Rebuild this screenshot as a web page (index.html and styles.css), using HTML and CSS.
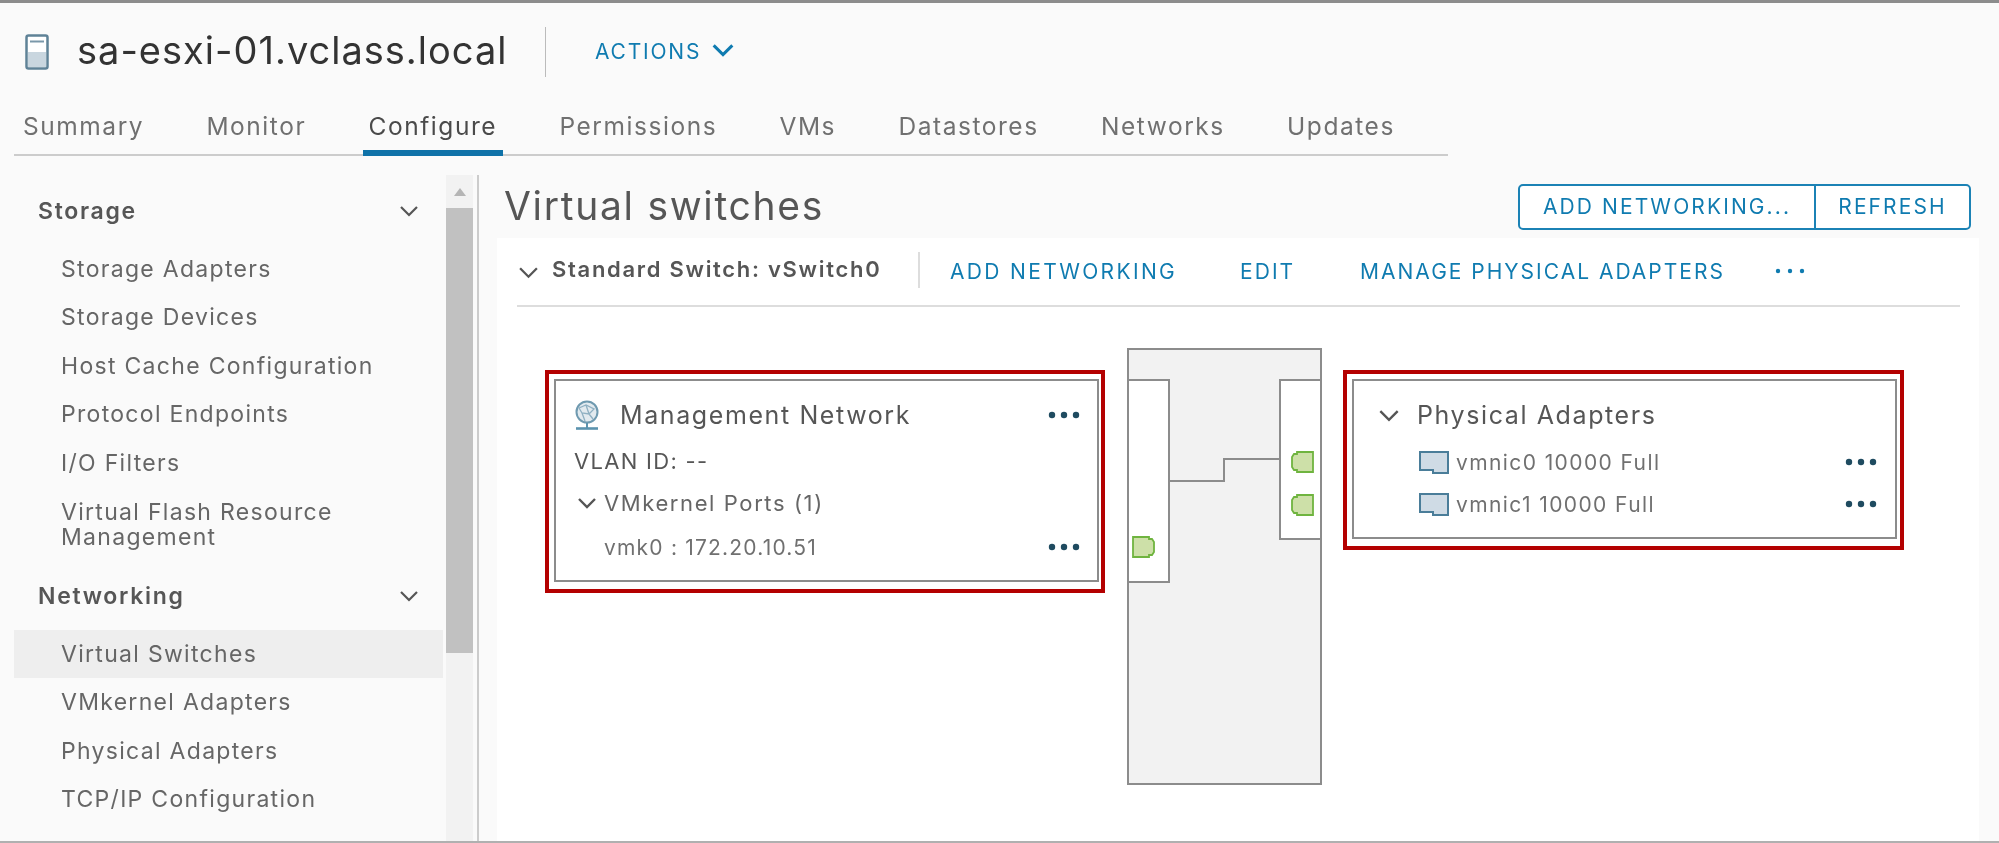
FILE: index.html
```html
<!DOCTYPE html>
<html lang="en">
<head>
<meta charset="utf-8">
<title>Virtual switches</title>
<link rel="stylesheet" href="styles.css">
</head>
<body>
<div class="page">
  <header class="head">
    <svg class="host-icon" viewBox="0 0 24 36"><rect x="1.5" y="1.5" width="21" height="33" rx="2" fill="#fff" stroke="#5f8297" stroke-width="2.5"/><rect x="3" y="18" width="18" height="15" fill="#c9d6df"/><path d="M5 7.5H19" stroke="#7a98aa" stroke-width="2"/></svg>
    <h1 class="host-name">sa-esxi-01.vclass.local</h1>
    <span class="head-sep"></span>
    <a class="actions">ACTIONS</a>
    <svg class="actions-chev" viewBox="0 0 20 12"><path d="M2 2L10 10L18 2" fill="none" stroke="#0f7bb0" stroke-width="2.6"/></svg>
  </header>
  <nav class="tabs">
    <a class="tab">Summary</a>
    <a class="tab">Monitor</a>
    <a class="tab active">Configure</a>
    <a class="tab">Permissions</a>
    <a class="tab">VMs</a>
    <a class="tab">Datastores</a>
    <a class="tab">Networks</a>
    <a class="tab">Updates</a>
  </nav>
  <div class="body">
    <aside class="side">
      <div class="side-nav">
        <div class="side-head first"><span>Storage</span><svg class="side-chev" viewBox="0 0 20 12"><path d="M2 2L10 10L18 2" fill="none" stroke="#555" stroke-width="2.2"/></svg></div>
        <div class="side-item">Storage Adapters</div>
        <div class="side-item">Storage Devices</div>
        <div class="side-item">Host Cache Configuration</div>
        <div class="side-item">Protocol Endpoints</div>
        <div class="side-item">I/O Filters</div>
        <div class="side-item double">Virtual Flash Resource<br>Management</div>
        <div class="side-head"><span>Networking</span><svg class="side-chev" viewBox="0 0 20 12"><path d="M2 2L10 10L18 2" fill="none" stroke="#555" stroke-width="2.2"/></svg></div>
        <div class="side-item selected">Virtual Switches</div>
        <div class="side-item">VMkernel Adapters</div>
        <div class="side-item">Physical Adapters</div>
        <div class="side-item">TCP/IP Configuration</div>
      </div>
      <div class="scrollbar">
        <svg class="scroll-up" viewBox="0 0 14 10"><path d="M7 1L13 9H1Z" fill="#b5b5b5"/></svg>
        <div class="scroll-thumb"></div>
      </div>
    </aside>
    <main class="main">
      <div class="title-row">
        <h2 class="page-title">Virtual switches</h2>
        <div class="btn-group">
          <button class="btn">ADD NETWORKING...</button>
          <button class="btn">REFRESH</button>
        </div>
      </div>
      <section class="panel">
        <div class="toolbar">
          <svg class="tool-chev" viewBox="0 0 20 12"><path d="M2 2L10 10L18 2" fill="none" stroke="#555" stroke-width="2.2"/></svg>
          <strong class="switch-name">Standard Switch: vSwitch0</strong>
          <span class="tool-sep"></span>
          <a class="tool-link link-add">ADD NETWORKING</a>
          <a class="tool-link link-edit">EDIT</a>
          <a class="tool-link link-manage">MANAGE PHYSICAL ADAPTERS</a>
          <svg class="tool-dots" viewBox="0 0 30 6"><circle cx="3" cy="3" r="2.2"/><circle cx="15" cy="3" r="2.2"/><circle cx="27" cy="3" r="2.2"/></svg>
        </div>
        <div class="diagram">
          <div class="red red-net">
            <div class="card card-net">
              <div class="net-row net-title">
                <svg class="globe" viewBox="0 0 24 30"><circle cx="12" cy="12" r="10.5" fill="#e2eaef" stroke="#6f9ab0" stroke-width="2"/><path d="M4 8L11 5L19 9L14 14L7 13L4 8M11 5L14 14M7 13L10 21M14 14L18 19" fill="none" stroke="#8fb0c2" stroke-width="1.3"/><path d="M12 23V28" stroke="#5b93ae" stroke-width="2"/><path d="M1 28.5H23" stroke="#5b93ae" stroke-width="2.6"/></svg>
                <span class="card-title">Management Network</span>
                <svg class="dots" viewBox="0 0 32 8"><circle cx="4" cy="4" r="3.2"/><circle cx="16" cy="4" r="3.2"/><circle cx="28" cy="4" r="3.2"/></svg>
              </div>
              <div class="net-row net-vlan">VLAN ID: --</div>
              <div class="net-row net-ports">
                <svg class="port-chev" viewBox="0 0 20 12"><path d="M2 2L10 10L18 2" fill="none" stroke="#555" stroke-width="2.4"/></svg>
                <span>VMkernel Ports (1)</span>
              </div>
              <div class="net-row net-vmk">
                <span>vmk0 : 172.20.10.51</span>
                <svg class="dots" viewBox="0 0 32 8"><circle cx="4" cy="4" r="3.2"/><circle cx="16" cy="4" r="3.2"/><circle cx="28" cy="4" r="3.2"/></svg>
              </div>
            </div>
          </div>
          <div class="switch">
            <svg class="wire" viewBox="0 0 191 433"><path d="M40 131H95V109H151" fill="none" stroke="#8c8c8c" stroke-width="2"/></svg>
            <div class="port-col port-left">
              <svg class="nic nic-left" viewBox="0 0 23 22"><path d="M1 1H17V3H20L22 6V16L20 19H17V21H1Z" fill="#cde0a8" stroke="#6fb43f" stroke-width="1.8"/></svg>
            </div>
            <div class="port-col port-right">
              <svg class="nic nic-r1" viewBox="0 0 23 22"><path d="M1 1H17V3H20L22 6V16L20 19H17V21H1Z" fill="#cde0a8" stroke="#6fb43f" stroke-width="1.8"/></svg>
              <svg class="nic nic-r2" viewBox="0 0 23 22"><path d="M1 1H17V3H20L22 6V16L20 19H17V21H1Z" fill="#cde0a8" stroke="#6fb43f" stroke-width="1.8"/></svg>
            </div>
          </div>
          <div class="red red-phy">
            <div class="card card-phy">
              <div class="phy-title">
                <svg class="phy-chev" viewBox="0 0 20 12"><path d="M2 2L10 10L18 2" fill="none" stroke="#555" stroke-width="2.2"/></svg>
                <span class="card-title">Physical Adapters</span>
              </div>
              <div class="phy-row">
                <svg class="vmnic" viewBox="0 0 30 23"><path d="M1 1H29V22H14V19H1Z" fill="#cfdbe5" stroke="#4a7d99" stroke-width="2"/></svg>
                <span class="phy-text">vmnic0 10000 Full</span>
                <svg class="dots" viewBox="0 0 32 8"><circle cx="4" cy="4" r="3.2"/><circle cx="16" cy="4" r="3.2"/><circle cx="28" cy="4" r="3.2"/></svg>
              </div>
              <div class="phy-row">
                <svg class="vmnic" viewBox="0 0 30 23"><path d="M1 1H29V22H14V19H1Z" fill="#cfdbe5" stroke="#4a7d99" stroke-width="2"/></svg>
                <span class="phy-text">vmnic1 10000 Full</span>
                <svg class="dots" viewBox="0 0 32 8"><circle cx="4" cy="4" r="3.2"/><circle cx="16" cy="4" r="3.2"/><circle cx="28" cy="4" r="3.2"/></svg>
              </div>
            </div>
          </div>
        </div>
      </section>
    </main>
  </div>
</div>
</body>
</html>
```
FILE: styles.css
```css
* { box-sizing: border-box; }
html, body { margin: 0; padding: 0; }
body { font-family: "Inter", "Liberation Sans", sans-serif; color: #565656; background: #fafafa; }
.page { width: 1999px; height: 843px; display: flex; flex-direction: column; overflow: hidden; background: #fafafa; border-top: 3px solid #8c8c8c; border-bottom: 2px solid #b0b0b0; filter: blur(0.3px); }

.head { height: 94px; flex: none; display: flex; align-items: center; padding-left: 25px; }
.host-icon { width: 24px; height: 36px; margin-top: 4px; flex: none; }
.host-name { margin: 0 0 0 28px; width: 468px; font-size: 38px; font-weight: 400; color: #333; letter-spacing: 1px; white-space: nowrap; }
.head-sep { width: 1px; height: 50px; background: #bbb; margin-top: 3px; }
.actions { margin-left: 49px; margin-top: 2px; font-size: 21px; color: #0f7bb0; letter-spacing: 1.8px; }
.actions-chev { width: 24px; height: 14px; margin-left: 10px; }

.tabs { flex: none; margin-left: 14px; width: 1434px; height: 59px; display: flex; gap: 50.3px; padding-left: 3px; border-bottom: 2px solid #ccc; }
.tab { height: 59px; padding: 0 6px; line-height: 58px; font-size: 24.5px; letter-spacing: 1.55px; color: #707070; border-bottom: 6px solid transparent; white-space: nowrap; }
.tab.active { color: #4a4a4a; border-bottom-color: #0f72a8; }

.body { flex: 1; display: flex; min-height: 0; padding-top: 19px; }
.side { width: 479px; flex: none; display: flex; border-right: 2px solid #ccc; }
.side-nav { width: 443px; flex: none; padding-left: 14px; }
.side-head { height: 48px; margin-top: 12px; margin-bottom: 10px; padding: 0 24px; display: flex; align-items: center; justify-content: space-between; font-size: 23px; letter-spacing: 1.7px; font-weight: 600; color: #565656; }
.side-chev { width: 20px; height: 12px; }
.side-item { height: 48.4px; padding-left: 47px; line-height: 48.4px; font-size: 23px; letter-spacing: 1.3px; color: #666; white-space: nowrap; }
.side-item.double { height: 73px; line-height: 25px; padding-top: 13px; }
.side-item.selected { background: #eeeeee; }
.scrollbar { width: 27px; margin-left: 3px; background: #f2f2f2; padding-top: 33px; position: relative; }
.scroll-up { position: absolute; left: 7px; top: 12px; width: 14px; height: 10px; }
.scroll-thumb { height: 445px; background: #c1c1c1; }

.main { flex: 1; min-width: 0; display: flex; flex-direction: column; }
.title-row { flex: none; height: 63px; padding: 0 28px 0 25px; display: flex; align-items: center; justify-content: space-between; }
.page-title { margin: -2px 0 0; font-size: 39px; letter-spacing: 1.7px; font-weight: 400; color: #565656; white-space: nowrap; }
.btn-group { display: flex; height: 46px; }
.btn { height: 46px; padding: 0; font: 400 21px "Inter", "Liberation Sans", sans-serif; letter-spacing: 2.1px; color: #0f7bb0; background: #fff; border: 2px solid #1b82b5; white-space: nowrap; }
.btn:first-child { width: 298px; border-radius: 5px 0 0 5px; }
.btn:last-child { width: 157px; margin-left: -2px; border-radius: 0 5px 5px 0; }

.panel { flex: 1; min-height: 0; margin: 0 20px 0 18px; background: #fff; }
.toolbar { height: 69px; margin: 0 19px 0 20px; display: flex; align-items: center; border-bottom: 2px solid #ddd; }
.tool-chev { width: 21px; height: 13px; margin-left: 1px; margin-top: 2px; flex: none; }
.switch-name { margin-left: 13px; width: 366px; font-size: 22px; letter-spacing: 1.7px; font-weight: 600; color: #565656; margin-top: -5px; white-space: nowrap; }
.tool-sep { width: 2px; height: 36px; background: #ddd; margin-top: -4px; }
.tool-link { font-size: 21px; color: #0f7bb0; letter-spacing: 2px; white-space: nowrap; }
.link-add { margin-left: 30px; letter-spacing: 2.35px; }
.link-edit { margin-left: 63px; }
.link-manage { margin-left: 65px; }
.tool-dots { width: 30px; height: 6px; margin-left: 50px; margin-top: -2px; fill: #0f7bb0; }

.diagram { display: flex; align-items: flex-start; padding-top: 41px; padding-left: 48px; }
.red { border: 4px solid #b40000; margin-top: 22px; background: #fff; flex: none; }
.red-net { width: 560px; height: 223px; padding: 5px 2px 7px 5px; }
.red-phy { width: 561px; height: 180px; padding: 5px 3px 7px 5px; margin-left: 21px; }
.card { height: 100%; border: 2px solid #8c8c8c; }
.card-title { font-size: 25px; letter-spacing: 1.6px; color: #565656; white-space: nowrap; }
.dots { width: 32px; height: 8px; fill: #1f4b60; flex: none; }

.card-net { padding-left: 19px; padding-right: 17px; }
.net-row { display: flex; align-items: center; }
.net-title { height: 46px; margin-top: 11px; }
.globe { width: 24px; height: 30px; flex: none; }
.net-title .card-title { margin-left: 21px; flex: 1; }
.net-vlan { height: 45px; margin-left: -1px; font-size: 22px; letter-spacing: 1.3px; color: #565656; }
.net-ports { height: 40px; font-size: 22px; letter-spacing: 1.6px; color: #666; }
.port-chev { width: 20px; height: 12px; margin-left: 2px; margin-right: 7px; flex: none; }
.net-vmk { height: 48px; padding-left: 29px; font-size: 21px; letter-spacing: 1.2px; color: #707070; justify-content: space-between; }

.switch { width: 195px; height: 437px; margin-left: 22px; position: relative; flex: none; background: #f2f2f2; border: 2px solid #8c8c8c; }
.wire { position: absolute; left: 0; top: 0; width: 191px; height: 433px; }
.port-col { position: absolute; top: 29px; background: #fff; border: 2px solid #8c8c8c; }
.port-left { left: 0; width: 41px; height: 204px; border-left: 0; }
.port-right { right: 0; width: 41px; height: 161px; border-right: 0; }
.nic { position: absolute; width: 23px; height: 22px; }
.nic-left { left: 3px; top: 155px; }
.nic-r1 { right: 6px; top: 70px; transform: scaleX(-1); }
.nic-r2 { right: 6px; top: 113px; transform: scaleX(-1); }

.card-phy { padding-left: 24px; padding-right: 18px; }
.phy-title { height: 46px; margin-top: 11px; margin-bottom: 3px; display: flex; align-items: center; }
.phy-chev { width: 22px; height: 13px; flex: none; }
.phy-title .card-title { margin-left: 17px; }
.phy-row { height: 42px; padding-left: 41px; display: flex; align-items: center; }
.vmnic { width: 30px; height: 23px; flex: none; }
.phy-text { flex: 1; margin-left: 7px; font-size: 21px; letter-spacing: 1.4px; color: #707070; white-space: nowrap; }
```
